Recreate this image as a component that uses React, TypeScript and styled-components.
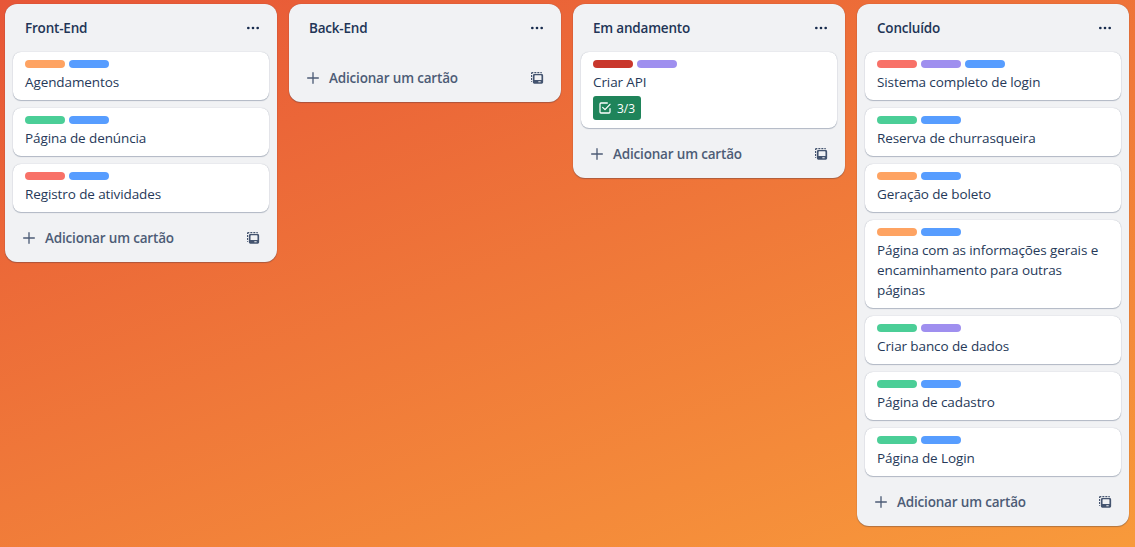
import React from 'react';
import styled, { createGlobalStyle } from 'styled-components';

const FONT = "'Segoe UI', 'Open Sans', 'Noto Sans', sans-serif";

const GlobalStyle = createGlobalStyle`
  * { box-sizing: border-box; }
  html, body { margin: 0; padding: 0; height: 100%; overflow: hidden; }
  body {
    font-family: ${FONT};
    font-size: 14px;
    line-height: 20px;
    color: #172b4d;
  }
`;

const COLORS = {
  orange: '#fea362',
  blue: '#579dff',
  green: '#4bce97',
  red: '#f87168',
  darkRed: '#c9372c',
  purple: '#9f8fef',
};

type LabelColor = keyof typeof COLORS;

const Board = styled.main`
  display: flex;
  align-items: flex-start;
  gap: 12px;
  height: 100vh;
  padding: 4px 5px;
  overflow: hidden;
  background: linear-gradient(160deg, #e75637 0%, #f89a3b 100%);
`;

const List = styled.section`
  flex: 0 0 272px;
  border-radius: 12px;
  background: #f1f2f4;
  box-shadow: 0 1px 1px rgba(9, 30, 66, 0.25), 0 0 1px rgba(9, 30, 66, 0.31);
`;

const ListHeader = styled.header`
  display: flex;
  align-items: center;
  justify-content: space-between;
  height: 48px;
  padding: 0 8px 0 20px;
`;

const ListTitle = styled.h2`
  margin: 0;
  color: #223556;
  font-size: 13.5px;
  font-weight: 600;
  line-height: 20px;
  letter-spacing: -0.2px;
`;

const IconButton = styled.button`
  display: flex;
  align-items: center;
  justify-content: center;
  width: 32px;
  height: 32px;
  padding: 0;
  border: 0;
  border-radius: 8px;
  background: transparent;
  color: inherit;
`;

const Cards = styled.ol`
  display: flex;
  flex-direction: column;
  gap: 8px;
  margin: 0;
  padding: 0 8px 2px;
  list-style: none;
`;

const CardBox = styled.li`
  padding: 8px 12px;
  border-radius: 8px;
  background: #fff;
  box-shadow: 0 1px 1px rgba(9, 30, 66, 0.25), 0 0 1px rgba(9, 30, 66, 0.31);
`;

const Labels = styled.div`
  display: flex;
  gap: 4px;
  margin-bottom: 4px;
`;

const Label = styled.span<{ $color: LabelColor }>`
  width: 40px;
  height: 8px;
  border-radius: 4px;
  background: ${(p) => COLORS[p.$color]};
`;

const CardTitle = styled.div`
  color: #263959;
  font-size: 13.5px;
  letter-spacing: -0.1px;
`;

const Badge = styled.div`
  display: flex;
  align-items: center;
  gap: 4px;
  width: 48px;
  height: 24px;
  margin-top: 4px;
  padding-left: 4px;
  border-radius: 3px;
  background: #1f845a;
  color: #fff;
  font-size: 12px;
  font-weight: 500;
`;

const BadgeText = styled.span`
  padding-top: 1px;
`;

const Footer = styled.footer`
  display: flex;
  align-items: center;
  justify-content: space-between;
  padding: 8px;
  color: #44546f;
`;

const AddButton = styled.button`
  display: flex;
  align-items: center;
  gap: 8px;
  height: 32px;
  padding: 0 8px;
  border: 0;
  background: transparent;
  color: #4d5c76;
  font: 600 13.5px/20px ${FONT};
  letter-spacing: -0.18px;
`;

const MoreIcon = () => (
  <svg width="16" height="16" viewBox="0 0 24 24" fill="currentColor">
    <circle cx="5" cy="12" r="2" />
    <circle cx="12" cy="12" r="2" />
    <circle cx="19" cy="12" r="2" />
  </svg>
);

const PlusIcon = () => (
  <svg width="16" height="16" viewBox="0 0 24 24" fill="currentColor">
    <path d="M12 3a1 1 0 0 0-1 1v7H4a1 1 0 1 0 0 2h7v7a1 1 0 1 0 2 0v-7h7a1 1 0 1 0 0-2h-7V4a1 1 0 0 0-1-1z" />
  </svg>
);

const TemplateIcon = () => (
  <svg width="16" height="16" viewBox="0 0 24 24" fill="currentColor" fillRule="evenodd">
    <path d="M3 6V5a2 2 0 0 1 2-2h1.500v1.700H5V6H3zM8 3h3v1.700H8V3zM12.500 3h3v1.700h-3V3zM17 3h1a1.500 1.500 0 0 1 1.500 1.700H17V3zM3 7.500h1.700v3H3v-3zM3 12h1.700v3H3v-3zM3 16.500h1.700V18A1.500 1.500 0 0 1 3 16.500z" />
    <path d="M8 6h11a2.200 2.200 0 0 1 2.200 2.200v10.300a2.200 2.200 0 0 1-2.200 2.200H8a2.200 2.200 0 0 1-2.200-2.200V8.200A2.200 2.200 0 0 1 8 6zM9 8a.7.7 0 0 0-.7.7V15h10.400V8.700a.7.7 0 0 0-.7-.7H9zM14 16.800v1.500h3.500v-1.500H14z" />
  </svg>
);

const CheckIcon = () => (
  <svg width="16" height="16" viewBox="0 0 24 24" fill="none" stroke="currentColor" strokeWidth="1.900" strokeLinecap="round" strokeLinejoin="round">
    <path d="M15.500 4.500H6a1.500 1.500 0 0 0-1.500 1.500v12A1.500 1.500 0 0 0 6 19.500h12a1.500 1.500 0 0 0 1.500-1.500v-5" />
    <path d="M8.500 11l3.500 3.500 7.500-8" />
  </svg>
);

interface CardData {
  title: string;
  labels: LabelColor[];
  badge?: string;
}

interface ListData {
  title: string;
  cards: CardData[];
}

const LISTS: ListData[] = [
  {
    title: 'Front-End',
    cards: [
      { title: 'Agendamentos', labels: ['orange', 'blue'] },
      { title: 'Página de denúncia', labels: ['green', 'blue'] },
      { title: 'Registro de atividades', labels: ['red', 'blue'] },
    ],
  },
  { title: 'Back-End', cards: [] },
  {
    title: 'Em andamento',
    cards: [{ title: 'Criar API', labels: ['darkRed', 'purple'], badge: '3/3' }],
  },
  {
    title: 'Concluído',
    cards: [
      { title: 'Sistema completo de login', labels: ['red', 'purple', 'blue'] },
      { title: 'Reserva de churrasqueira', labels: ['green', 'blue'] },
      { title: 'Geração de boleto', labels: ['orange', 'blue'] },
      {
        title: 'Página com as informações gerais e encaminhamento para outras páginas',
        labels: ['orange', 'blue'],
      },
      { title: 'Criar banco de dados', labels: ['green', 'purple'] },
      { title: 'Página de cadastro', labels: ['green', 'blue'] },
      { title: 'Página de Login', labels: ['green', 'blue'] },
    ],
  },
];

const Card = ({ title, labels, badge }: CardData) => (
  <CardBox>
    <Labels>
      {labels.map((color) => (
        <Label key={color} $color={color} />
      ))}
    </Labels>
    <CardTitle>{title}</CardTitle>
    {badge && (
      <Badge>
        <CheckIcon />
        <BadgeText>{badge}</BadgeText>
      </Badge>
    )}
  </CardBox>
);

export default function App() {
  return (
    <>
      <GlobalStyle />
      <Board>
        {LISTS.map((list) => (
          <List key={list.title}>
            <ListHeader>
              <ListTitle>{list.title}</ListTitle>
              <IconButton aria-label="Mais">
                <MoreIcon />
              </IconButton>
            </ListHeader>
            <Cards>
              {list.cards.map((card) => (
                <Card key={card.title} {...card} />
              ))}
            </Cards>
            <Footer>
              <AddButton>
                <PlusIcon />
                Adicionar um cartão
              </AddButton>
              <IconButton aria-label="Modelo">
                <TemplateIcon />
              </IconButton>
            </Footer>
          </List>
        ))}
      </Board>
    </>
  );
}
